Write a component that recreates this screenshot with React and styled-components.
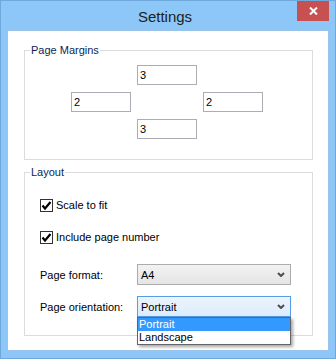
import React from 'react';
import styled, { createGlobalStyle } from 'styled-components';

const Global = createGlobalStyle`
  html, body {
    margin: 0;
    padding: 0;
    background: #fff;
  }
  * {
    box-sizing: border-box;
  }
`;

const Window = styled.div`
  width: 336px;
  height: 359px;
  display: flex;
  flex-direction: column;
  background: #8cc7f7;
  border: 1px solid #6fa8dc;
  font-family: "Liberation Sans", Arial, sans-serif;
  font-size: 11px;
  color: #000;
`;

const TitleBar = styled.div`
  height: 29px;
  display: grid;
  grid-template-columns: 1fr auto 1fr;
  padding-right: 6px;
`;

const Title = styled.div`
  grid-column: 2;
  align-self: center;
  font-size: 15px;
  color: #1e1e1e;
  padding-top: 1px;
`;

const CloseButton = styled.button`
  grid-column: 3;
  justify-self: end;
  align-self: start;
  width: 32px;
  height: 20px;
  border: 0;
  padding: 0;
  background: #c75050;
  display: flex;
  align-items: center;
  justify-content: center;
`;

const Client = styled.div`
  flex: 1;
  margin: 0 6px 7px 6px;
  border: 1px solid #9cc3e9;
  background: #fff;
  padding: 0 15px 0 16px;
  display: flex;
  flex-direction: column;
`;

const Group = styled.div`
  position: relative;
  border: 1px solid #dcdcdc;
  margin-top: ${({ top }) => top}px;
  height: ${({ h }) => h}px;
  padding: ${({ pad }) => pad};
`;

const Legend = styled.span`
  position: absolute;
  top: -7px;
  left: 5px;
  padding: 0 1px;
  background: #fff;
  line-height: 13px;
  color: #0d1f55;
`;

const MarginGrid = styled.div`
  display: grid;
  grid-template-columns: repeat(3, 60px);
  grid-template-rows: repeat(3, 20px);
  column-gap: 6px;
  row-gap: 7px;
`;

const NumberBox = styled.input`
  grid-column: ${({ col }) => col};
  grid-row: ${({ row }) => row};
  width: 60px;
  height: 20px;
  border: 1px solid #abadb3;
  padding: 0 2px;
  font: inherit;
  color: #000;
  outline: none;
`;

const CheckList = styled.div`
  display: flex;
  flex-direction: column;
  gap: 19px;
`;

const CheckRow = styled.label`
  display: flex;
  align-items: center;
  gap: 3px;
  height: 13px;
  line-height: 13px;
`;

const Box = styled.span`
  width: 13px;
  height: 13px;
  border: 1px solid #333;
  background: #fff;
  display: flex;
  align-items: center;
  justify-content: center;
`;

const Fields = styled.div`
  margin-top: 20px;
  display: grid;
  grid-template-columns: 97px 154px;
  row-gap: 11px;
  align-items: center;
`;

const SelectWrap = styled.div`
  position: relative;
`;

const Select = styled.div`
  height: 21px;
  display: flex;
  align-items: center;
  justify-content: space-between;
  padding: 0 5px 0 3px;
  border: 1px solid ${({ open }) => (open ? '#569de5' : '#acacac')};
  background: ${({ open }) =>
    open ? 'linear-gradient(#ecf4fc, #dcecfc)' : 'linear-gradient(#f2f2f2, #e5e5e5)'};
`;

const List = styled.div`
  position: absolute;
  top: 100%;
  left: 0;
  width: 154px;
  border: 1px solid #646464;
  background: #fff;
  box-shadow: 2px 2px 3px rgba(0, 0, 0, 0.35);
  z-index: 2;
`;

const Item = styled.div`
  height: 13px;
  line-height: 13px;
  padding-left: 1px;
  background: ${({ active }) => (active ? '#3399ff' : '#fff')};
  color: ${({ active }) => (active ? '#fff' : '#000')};
`;

const Check = () => (
  <svg width="11" height="11" viewBox="0 0 11 11">
    <polyline points="1.5,5.5 4,8.5 9.5,2" fill="none" stroke="#000" strokeWidth="2.2" />
  </svg>
);

const Chevron = () => (
  <svg width="8" height="5" viewBox="0 0 8 5">
    <polyline points="1,1 4,4 7,1" fill="none" stroke="#4d4d4d" strokeWidth="2" />
  </svg>
);

const margins = [
  { col: 2, row: 1, value: '3' },
  { col: 1, row: 2, value: '2' },
  { col: 3, row: 2, value: '2' },
  { col: 2, row: 3, value: '3' },
];

export default function App() {
  return (
    <>
      <Global />
      <Window>
        <TitleBar>
          <Title>Settings</Title>
          <CloseButton>
            <svg width="9" height="8" viewBox="0 0 9 8">
              <path d="M1 0.5 L8 7.5 M8 0.5 L1 7.5" stroke="#fff" strokeWidth="2" />
            </svg>
          </CloseButton>
        </TitleBar>
        <Client>
          <Group top={19} h={110} pad="14px 0 0 46px">
            <Legend>Page Margins</Legend>
            <MarginGrid>
              {margins.map((m, i) => (
                <NumberBox key={i} col={m.col} row={m.row} defaultValue={m.value} readOnly />
              ))}
            </MarginGrid>
          </Group>
          <Group top={12} h={164} pad="26px 0 0 15px">
            <Legend>Layout</Legend>
            <CheckList>
              <CheckRow>
                <Box><Check /></Box>
                Scale to fit
              </CheckRow>
              <CheckRow>
                <Box><Check /></Box>
                Include page number
              </CheckRow>
            </CheckList>
            <Fields>
              <span>Page format:</span>
              <Select>
                A4
                <Chevron />
              </Select>
              <span>Page orientation:</span>
              <SelectWrap>
                <Select open>
                  Portrait
                  <Chevron />
                </Select>
                <List>
                  <Item active>Portrait</Item>
                  <Item>Landscape</Item>
                </List>
              </SelectWrap>
            </Fields>
          </Group>
        </Client>
      </Window>
    </>
  );
}
